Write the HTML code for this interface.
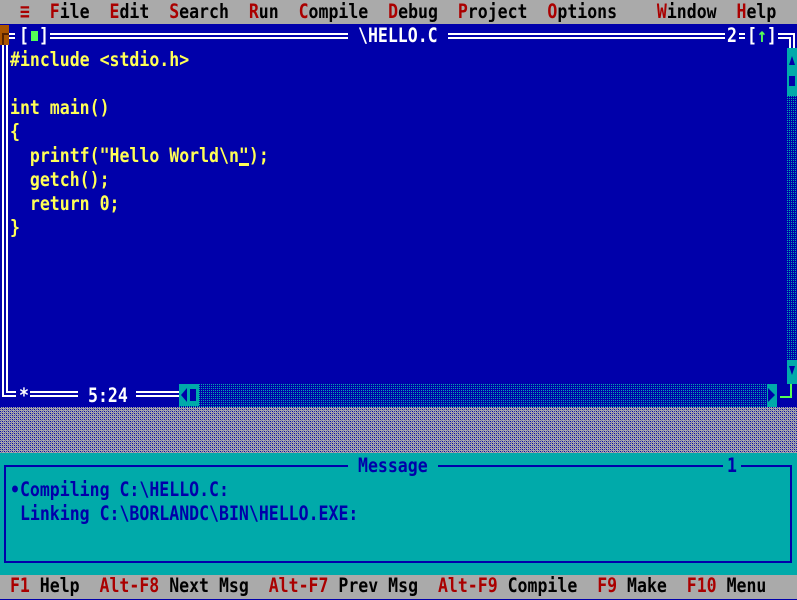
<!DOCTYPE html>
<html><head><meta charset="utf-8"><style>
*{margin:0;padding:0;box-sizing:border-box}
body{width:797px;height:599px;overflow:hidden;background:#0000aa;position:relative;font-family:"DejaVu Sans Mono","Liberation Mono",monospace;font-weight:bold;font-size:16.55px}
.a{position:absolute}
.row{position:absolute;left:0;height:24px;line-height:24px;white-space:pre}
.row span,.t{display:inline-block;transform:scaleY(1.2)}
.r{color:#aa0000}.k{color:#000}.w{color:#fff}.y{color:#ffff55}.b{color:#0000aa}.g{color:#55ff55}
</style></head><body>
<svg width="0" height="0" style="position:absolute"><defs>
<pattern id="dg" width="4" height="4" patternUnits="userSpaceOnUse"><rect width="4" height="4" fill="#aaaaaa"/><rect x="0" y="0" width="1" height="1" fill="#0000aa"/><rect x="2" y="2" width="1" height="1" fill="#0000aa"/><rect x="2" y="0" width="1" height="1" fill="#3333aa"/><rect x="0" y="2" width="1" height="1" fill="#3333aa"/><rect x="1" y="1" width="1" height="1" fill="#7777aa"/><rect x="3" y="3" width="1" height="1" fill="#7777aa"/></pattern>
<pattern id="dc" width="2" height="2" patternUnits="userSpaceOnUse"><rect width="2" height="2" fill="#0000aa"/><rect width="1" height="1" fill="#00aaaa"/></pattern>
</defs></svg>

<div class="a" style="left:0;top:0;width:797px;height:24px;background:#aaaaaa"></div>
<div class="row" style="top:0"><span class="r">  ≡  F</span><span class="k">ile  </span><span class="r">E</span><span class="k">dit  </span><span class="r">S</span><span class="k">earch  </span><span class="r">R</span><span class="k">un  </span><span class="r">C</span><span class="k">ompile  </span><span class="r">D</span><span class="k">ebug  </span><span class="r">P</span><span class="k">roject  </span><span class="r">O</span><span class="k">ptions    </span><span class="r">W</span><span class="k">indow  </span><span class="r">H</span><span class="k">elp</span></div>

<div class="a" style="left:2px;top:33px;width:793px;height:364px;border:6px double #fff;border-width:6px"></div>
<div class="a" style="left:0;top:25px;width:9px;height:20px;background:#aa5500"></div>
<div class="a" style="left:2px;top:33px;width:7px;height:12px;border-left:2px solid #552200;border-top:2px solid #552200"></div>

<div class="a" style="left:15px;top:24px;width:35px;height:24px;background:#0000aa"></div>
<div class="row w" style="top:24px;left:19px"><span>[</span></div>
<div class="a" style="left:31px;top:31px;width:7px;height:10px;background:#55ff55"></div>
<div class="row w" style="top:24px;left:39px"><span>]</span></div>
<div class="a" style="left:348px;top:24px;width:100px;height:24px;background:#0000aa"></div>
<div class="row w" style="top:24px;left:358px"><span>\HELLO.C</span></div>
<div class="a" style="left:725px;top:24px;width:14px;height:24px;background:#0000aa"></div>
<div class="a" style="left:745px;top:24px;width:33px;height:24px;background:#0000aa"></div>
<div class="row w" style="top:24px;left:727px"><span>2</span></div>
<div class="row w" style="top:24px;left:747px"><span>[</span><span class="g">↑</span><span>]</span></div>

<div class="row y" style="top:48px;left:10px"><span>#include &lt;stdio.h&gt;</span></div>
<div class="row y" style="top:96px;left:10px"><span>int main()</span></div>
<div class="row y" style="top:120px;left:10px"><span>{</span></div>
<div class="row y" style="top:144px;left:10px"><span>  printf("Hello World\n");</span></div>
<div class="a" style="left:239px;top:163px;width:10px;height:3px;background:#ffff55"></div>
<div class="row y" style="top:168px;left:10px"><span>  getch();</span></div>
<div class="row y" style="top:192px;left:10px"><span>  return 0;</span></div>
<div class="row y" style="top:216px;left:10px"><span>}</span></div>

<svg class="a" style="left:787px;top:48px" width="10" height="336"><rect width="10" height="336" fill="url(#dc)"/><rect width="10" height="48" fill="#00aaaa"/><path d="M2 17 L5 8 L8 17Z" fill="#0000aa"/><rect x="2" y="28" width="6" height="10" fill="#0000aa"/><rect y="312" width="10" height="24" fill="#00aaaa"/><path d="M2 318 L5 327 L8 318Z" fill="#0000aa"/></svg>

<div class="a" style="left:16px;top:384px;width:14px;height:24px;background:#0000aa"></div>
<div class="row w" style="top:384px;left:19px"><span>*</span></div>
<div class="a" style="left:78px;top:384px;width:58px;height:24px;background:#0000aa"></div>
<div class="row w" style="top:384px;left:88px"><span>5:24</span></div>
<svg class="a" style="left:179px;top:384px" width="618" height="24"><rect width="618" height="24" fill="#0000aa"/><rect width="598" height="23" fill="url(#dc)"/><rect width="20" height="22" fill="#00aaaa"/><path d="M2 11 L8 4 L8 18Z" fill="#0000aa"/><rect x="11" y="5" width="6" height="12" fill="#0000aa"/><rect x="588" width="10" height="24" fill="#00aaaa"/><path d="M589 4 L596 11 L589 18Z" fill="#0000aa"/><path d="M612 0 L612 13 L601 13" stroke="#55ff55" stroke-width="2" fill="none"/></svg>

<svg class="a" style="left:0;top:407px" width="797" height="47"><rect width="797" height="47" fill="url(#dg)"/></svg>

<div class="a" style="left:0;top:453px;width:797px;height:123px;background:#00aaaa"></div>
<div class="a" style="left:4px;top:465px;width:788px;height:98px;border:2px solid #0000aa"></div>
<div class="a" style="left:348px;top:456px;width:90px;height:20px;background:#00aaaa"></div>
<div class="row b" style="top:454px;left:358px"><span>Message</span></div>
<div class="a" style="left:723px;top:456px;width:18px;height:20px;background:#00aaaa"></div>
<div class="row b" style="top:454px;left:727px"><span>1</span></div>
<div class="row b" style="top:478px;left:10px"><span>•Compiling C:\HELLO.C:</span></div>
<div class="row b" style="top:502px;left:10px"><span> Linking C:\BORLANDC\BIN\HELLO.EXE:</span></div>

<div class="a" style="left:0;top:575px;width:797px;height:24px;background:#aaaaaa"></div>
<div class="row" style="top:574px"><span class="k"> </span><span class="r">F1</span><span class="k"> Help  </span><span class="r">Alt-F8</span><span class="k"> Next Msg  </span><span class="r">Alt-F7</span><span class="k"> Prev Msg  </span><span class="r">Alt-F9</span><span class="k"> Compile  </span><span class="r">F9</span><span class="k"> Make  </span><span class="r">F10</span><span class="k"> Menu</span></div>
</body></html>
